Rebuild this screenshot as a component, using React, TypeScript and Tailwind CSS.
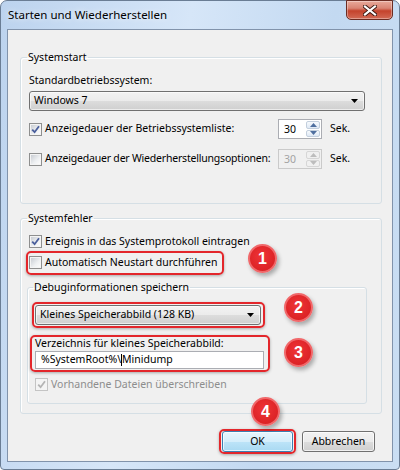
import React from "react";

function CheckBox({ checked, disabled }: { checked?: boolean; disabled?: boolean }) {
  return (
    <span
      className={`flex h-[13px] w-[13px] shrink-0 border p-px ${
        disabled ? "border-[#c4c4c4] bg-[#f4f4f4]" : "border-[#8e8f8f] bg-[#f4f4f4]"
      }`}
    >
      <span
        className={`flex flex-1 items-center justify-center ${
          disabled ? "bg-[#f4f4f4]" : "bg-[linear-gradient(135deg,#c9cdd3,#eef0f2_60%,#fbfbfb)]"
        }`}
      >
        {checked && (
          <svg width="9" height="9" viewBox="0 0 9 9">
            <path
              d="M1.2 4.6 L3.6 7.2 L8 1.2"
              fill="none"
              stroke={disabled ? "#b4b4b4" : "#4a5f9c"}
              strokeWidth="1.8"
            />
          </svg>
        )}
      </span>
    </span>
  );
}

function ArrowBtn({ up, disabled }: { up?: boolean; disabled?: boolean }) {
  return (
    <span
      className={`flex flex-1 items-center justify-center rounded-[2px] border ${
        disabled
          ? "border-[#d6d6d6] bg-[#f0f0f0]"
          : "border-[#c3cfdd] bg-[linear-gradient(#f7fafd,#dfe9f5)]"
      }`}
    >
      <svg width="7" height="4" viewBox="0 0 7 4">
        <path d={up ? "M0 4 L3.5 0 L7 4 Z" : "M0 0 L7 0 L3.5 4 Z"} fill={disabled ? "#bdbdbd" : "#4f6f9f"} />
      </svg>
    </span>
  );
}

function Spinner({ disabled }: { disabled?: boolean }) {
  return (
    <div
      className={`flex h-[20px] w-[44px] shrink-0 border ${
        disabled ? "border-[#cacaca] bg-[#f0f0f0] text-[#a3a3a3]" : "border-[#abadb3] bg-white text-black"
      }`}
    >
      <span className="flex-1 pl-[5px] leading-[18px]">30</span>
      <div className="flex w-[16px] flex-col gap-px p-px">
        <ArrowBtn up disabled={disabled} />
        <ArrowBtn disabled={disabled} />
      </div>
    </div>
  );
}

function Combo({ label, className }: { label: string; className: string }) {
  return (
    <div
      className={`flex h-[20px] items-center justify-between rounded-[3px] border border-[#707070] bg-[linear-gradient(#f2f2f2,#ebebeb_50%,#dddddd_50%,#cfcfcf)] pl-[4px] pr-[6px] shadow-[inset_0_0_0_1px_rgba(255,255,255,0.6)] ${className}`}
    >
      <span>{label}</span>
      <svg width="7" height="4" viewBox="0 0 7 4">
        <path d="M0 0 L7 0 L3.5 4 Z" fill="#000" />
      </svg>
    </div>
  );
}

function Highlight({ className }: { className: string }) {
  return (
    <span
      className={`pointer-events-none absolute rounded-[5px] border-2 border-[#e3262b] shadow-[0_1px_3px_rgba(0,0,0,0.3)] ${className}`}
    />
  );
}

function Badge({ n, className }: { n: number; className: string }) {
  return (
    <div
      className={`absolute flex h-[29px] w-[29px] items-center justify-center rounded-full border-2 border-[#f0686a] bg-[radial-gradient(circle_at_45%_40%,#ef3437,#dc2326_70%,#c81b1e)] font-['Liberation_Sans',sans-serif] text-[16px] font-bold text-white shadow-[2px_3px_4px_rgba(0,0,0,0.3)] ${className}`}
    >
      {n}
    </div>
  );
}

function Legend({ children }: { children: React.ReactNode }) {
  return <legend className="-ml-[2px] px-[1px] leading-[15px]">{children}</legend>;
}

export default function App() {
  return (
    <div className="relative flex h-[470px] w-[400px] flex-col rounded-t-[7px] rounded-b-[4px] border border-[#6a7d94] bg-[linear-gradient(100deg,#bcd3ee,#d6e6f8_40%,#c3d9f1_70%,#cadef3)] px-[6px] pb-[7px] font-['Noto_Sans',sans-serif] text-[10.5px] text-black">
      {/* title bar */}
      <div className="flex h-[28px] items-start justify-between">
        <span className="mt-[6px] pl-[1px] text-[11.5px] leading-[16px] [text-shadow:0_0_6px_#fff]">
          Starten und Wiederherstellen
        </span>
        <div className="-mt-[1px] flex h-[20px] w-[47px] items-center justify-center rounded-b-[5px] border border-[#6b2c22] bg-[linear-gradient(#e9aa9b,#d98473_40%,#c4432c_55%,#d26a55)] shadow-[inset_0_0_0_1px_rgba(255,255,255,0.35)]">
          <svg width="14" height="11" viewBox="0 0 14 11">
            <path d="M2 1.5 L12 9.5 M12 1.5 L2 9.5" stroke="#3b1710" strokeWidth="4" strokeLinecap="square" />
            <path d="M2 1.5 L12 9.5 M12 1.5 L2 9.5" stroke="#fff" strokeWidth="2.2" strokeLinecap="square" />
          </svg>
        </div>
      </div>

      {/* client area */}
      <div className="flex flex-1 flex-col border border-[#8193ab] bg-[#f0f0f0] pl-[12px] pr-[10px]">
        <fieldset className="mt-[20px] rounded-[3px] border border-[#d5dfe5] pb-[34px] pl-[8px] pr-[16px] pt-[8px] shadow-[inset_1px_1px_0_#fff]">
          <Legend>Systemstart</Legend>
          <div className="leading-[15px]">Standardbetriebssystem:</div>
          <Combo label="Windows 7" className="mt-[3px]" />
          <div className="mt-[8px] flex h-[20px] items-center">
            <div className="flex w-[249px] shrink-0 items-center whitespace-nowrap">
              <CheckBox checked />
              <span className="ml-[3px]">Anzeigedauer der Betriebssystemliste:</span>
            </div>
            <Spinner />
            <span className="ml-[8px]">Sek.</span>
          </div>
          <div className="mt-[10px] flex h-[20px] items-center">
            <div className="flex w-[249px] shrink-0 items-center whitespace-nowrap">
              <CheckBox />
              <span className="ml-[3px] tracking-[-0.2px]">Anzeigedauer der Wiederherstellungsoptionen:</span>
            </div>
            <Spinner disabled />
            <span className="ml-[8px]">Sek.</span>
          </div>
        </fieldset>

        <fieldset className="mt-[7px] rounded-[3px] border border-[#d5dfe5] pb-[9px] pl-[8px] pr-[14px] pt-[7px] shadow-[inset_1px_1px_0_#fff]">
          <Legend>Systemfehler</Legend>
          <div className="flex h-[17px] items-center">
            <CheckBox checked />
            <span className="ml-[3px]">Ereignis in das Systemprotokoll eintragen</span>
          </div>
          <div className="relative mt-[4px] flex h-[17px] w-fit items-center pr-[4px]">
            <CheckBox />
            <span className="ml-[3px]">Automatisch Neustart durchführen</span>
            <Highlight className="-bottom-[4px] -left-[3px] -right-[2px] -top-[3px]" />
          </div>

          <fieldset className="-ml-[2px] mt-[9px] rounded-[3px] border border-[#d5dfe5] pb-[10px] pl-[7px] pr-[7px] pt-[10px] shadow-[inset_1px_1px_0_#fff]">
            <Legend>Debuginformationen speichern</Legend>
            <div className="relative w-[226px]">
              <Combo label="Kleines Speicherabbild (128 KB)" className="" />
              <Highlight className="-bottom-[3px] -left-[3px] -right-[4px] -top-[3px]" />
            </div>
            <div className="relative mt-[11px] w-[229px]">
              <div className="leading-[15px]">Verzeichnis für kleines Speicherabbild:</div>
              <div className="flex h-[18px] items-center border border-[#abadb3] bg-white pl-[5px]">
                <span>%SystemRoot%\</span>
                <span className="h-[12px] w-px bg-black" />
                <span>Minidump</span>
              </div>
              <Highlight className="-bottom-[3px] -left-[5px] -right-[6px] -top-[1px]" />
            </div>
            <div className="mt-[7px] flex h-[17px] items-center text-[#8d8d8d]">
              <CheckBox checked disabled />
              <span className="ml-[3px]">Vorhandene Dateien überschreiben</span>
            </div>
          </fieldset>
        </fieldset>

        <div className="mr-[7px] mt-[17px] flex justify-end gap-[9px]">
          <div className="relative">
            <button className="h-[21px] w-[71px] rounded-[3px] border border-[#3c7fb1] bg-[linear-gradient(#e8f5fc,#d5eefb_50%,#bde4f8_50%,#a9d9f2)] shadow-[inset_0_0_0_1px_rgba(255,255,255,0.7)]">
              OK
            </button>
            <Highlight className="-bottom-[2px] -left-[3px] -right-[3px] -top-[2px]" />
          </div>
          <button className="h-[21px] w-[73px] rounded-[3px] border border-[#707070] bg-[linear-gradient(#f2f2f2,#ebebeb_50%,#dddddd_50%,#cfcfcf)] shadow-[inset_0_0_0_1px_rgba(255,255,255,0.7)]">
            Abbrechen
          </button>
        </div>
      </div>

      {/* annotation badges */}
      <Badge n={1} className="left-[247px] top-[243px]" />
      <Badge n={2} className="left-[283px] top-[292px]" />
      <Badge n={3} className="left-[283px] top-[337px]" />
      <Badge n={4} className="left-[250px] top-[396px]" />
    </div>
  );
}
